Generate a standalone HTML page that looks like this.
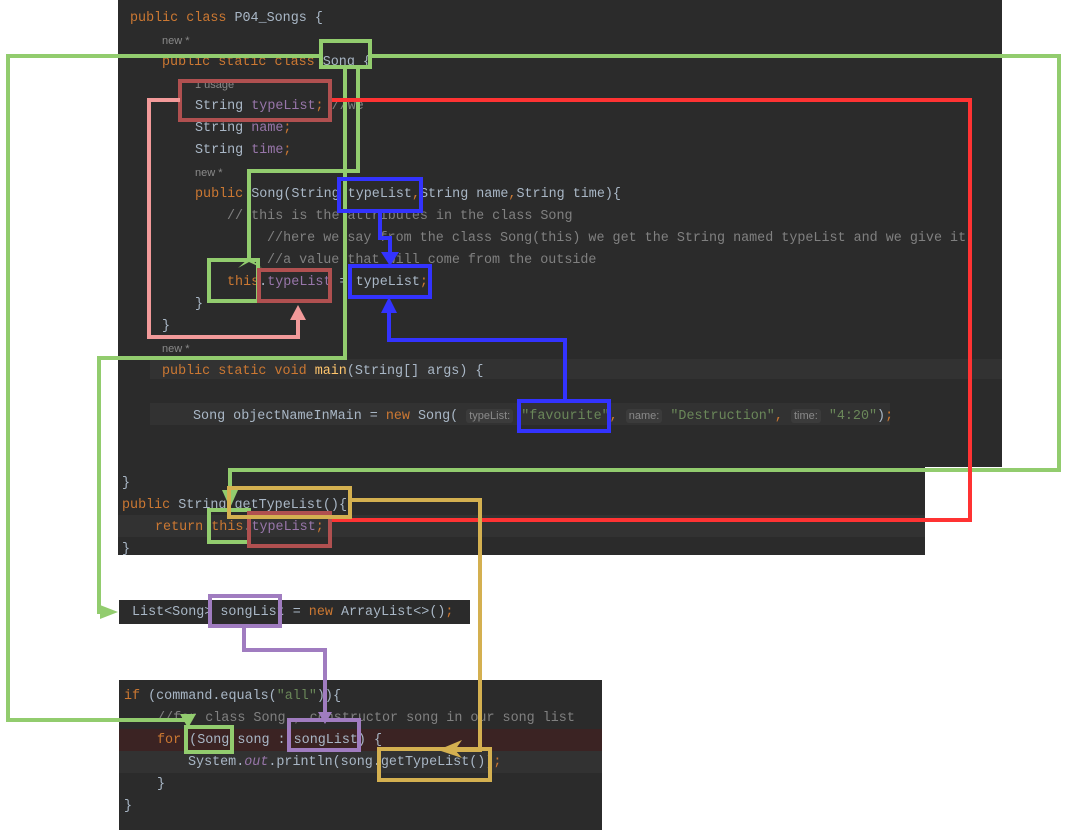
<!DOCTYPE html>
<html><head><meta charset="utf-8"><style>
body{margin:0;width:1070px;height:830px;background:#fff;position:relative;overflow:hidden;font-family:"Liberation Mono",monospace;}
.p{position:absolute;background:#2b2b2b;}
.t{position:absolute;white-space:pre;font-size:13.4px;line-height:16px;color:#a9b7c6;margin-top:2px}
.s{position:absolute;white-space:pre;font-family:"Liberation Sans",sans-serif;font-size:11px;color:#8a8a8a;margin-top:2px}
.k{color:#cc7832}.v{color:#9876aa}.c{color:#808080}.g{color:#6a8759}.y{color:#ffc66d}.h{background:#3b3b3b;color:#8a8a8a;font-family:"Liberation Sans",sans-serif;font-size:11px;padding:1px 3px;border-radius:3px}
svg{position:absolute;left:0;top:0}
</style></head><body>
<div class="p" style="left:118px;top:0;width:884px;height:467px"></div>
<div class="p" style="left:118px;top:467px;width:807px;height:88px"></div>
<div class="p" style="left:150px;top:359px;width:852px;height:20px;background:#323232"></div>
<div class="p" style="left:150px;top:403px;width:740px;height:22px;background:#323232"></div>
<div class="p" style="left:118px;top:515px;width:807px;height:22px;background:#323232"></div>
<div class="p" style="left:119px;top:600px;width:351px;height:24px"></div>
<div class="p" style="left:119px;top:680px;width:483px;height:150px"></div>
<div class="p" style="left:119px;top:729px;width:483px;height:22px;background:#3b2323"></div>
<div class="p" style="left:119px;top:751px;width:483px;height:22px;background:#323232"></div>

<div class="t" style="left:130px;top:9px"><span class="k">public class </span>P04_Songs {</div>
<div class="s" style="left:162px;top:33px">new *</div>
<div class="t" style="left:162px;top:53px"><span class="k">public static class </span>Song {</div>
<div class="s" style="left:195px;top:77px">1 usage</div>
<div class="t" style="left:195px;top:97px">String <span class="v">typeList</span><span class="k">;</span> <span class="c">//we</span></div>
<div class="t" style="left:195px;top:119px">String <span class="v">name</span><span class="k">;</span></div>
<div class="t" style="left:195px;top:141px">String <span class="v">time</span><span class="k">;</span></div>
<div class="s" style="left:195px;top:165px">new *</div>
<div class="t" style="left:195px;top:185px"><span class="k">public </span>Song(String typeList<span class="k">,</span>String name<span class="k">,</span>String time){</div>
<div class="t" style="left:227px;top:207px;color:#808080">// this is the attributes in the class Song</div>
<div class="t" style="left:267px;top:229px;color:#808080">//here we say from the class Song(this) we get the String named typeList and we give it</div>
<div class="t" style="left:267px;top:251px;color:#808080">//a value that will come from the outside</div>
<div class="t" style="left:227px;top:273px"><span class="k">this</span>.<span class="v">typeList</span> = typeList<span class="k">;</span></div>
<div class="t" style="left:195px;top:295px">}</div>
<div class="t" style="left:162px;top:317px">}</div>
<div class="s" style="left:162px;top:341px">new *</div>
<div class="t" style="left:162px;top:362px"><span class="k">public static void </span><span class="y">main</span>(String[] args) {</div>
<div class="t" style="left:193px;top:406px">Song objectNameInMain = <span class="k">new </span>Song( <span class="h">typeList:</span> <span class="g">"favourite"</span><span class="k">,</span> <span class="h">name:</span> <span class="g">"Destruction"</span><span class="k">,</span> <span class="h">time:</span> <span class="g">"4:20"</span>)<span class="k">;</span></div>
<div class="t" style="left:122px;top:474px">}</div>
<div class="t" style="left:122px;top:496px"><span class="k">public </span>String getTypeList(){</div>
<div class="t" style="left:155px;top:518px"><span class="k">return this</span>.<span class="v">typeList</span><span class="k">;</span></div>
<div class="t" style="left:122px;top:540px">}</div>
<div class="t" style="left:132px;top:603px">List&lt;Song&gt; songList = <span class="k">new </span>ArrayList&lt;&gt;()<span class="k">;</span></div>
<div class="t" style="left:124px;top:687px"><span class="k">if </span>(command.equals(<span class="g">"all"</span>)){</div>
<div class="t" style="left:157px;top:709px;color:#808080">//for class Song , constructor song in our song list</div>
<div class="t" style="left:157px;top:731px"><span class="k">for </span>(Song song : songList) {</div>
<div class="t" style="left:188px;top:753px">System.<span class="v" style="font-style:italic">out</span>.println(song.getTypeList())<span class="k">;</span></div>
<div class="t" style="left:157px;top:775px">}</div>
<div class="t" style="left:124px;top:797px">}</div>

<svg width="1070" height="830" fill="none" stroke-width="4">
<g stroke="#92cc6e">
<rect x="321" y="41" width="49" height="26"/>
<polyline points="319,56 8,56 8,720 188,720"/>
<polyline points="371,56 1059,56 1059,470 230,470 230,495"/>
<polyline points="345,68 345,358 99,358 99,612 110,612"/>
<polyline points="358,68 358,171 249,171 249,262"/>
<rect x="209" y="260" width="49" height="41"/>
<rect x="209" y="510" width="40" height="32"/>
<rect x="186" y="727" width="46" height="25"/>
</g>
<g fill="#92cc6e"><path d="M238,268 L249,258 L262,268 L249,262Z"/><path d="M222,490 L238,490 L230,508Z"/><path d="M100,605 L118,612 L100,619Z"/><path d="M180,714 L196,714 L188,728Z"/></g>
<g stroke="#ff3333"><polyline points="330,100 970,100 970,520 332,520"/></g>
<g stroke="#b05050"><rect x="180" y="81" width="150" height="39"/><rect x="259" y="270" width="71" height="31"/><rect x="249" y="513" width="81" height="33"/></g>
<g stroke="#f29a9a"><polyline points="180,100 149,100 149,337 298,337 298,310"/></g>
<path d="M290,320 L298,305 L306,320Z" fill="#f29a9a"/>
<g stroke="#3333ff"><rect x="339" y="179" width="82" height="32"/><rect x="350" y="266" width="80" height="31"/><rect x="519" y="401" width="90" height="30"/>
<polyline points="380,211 380,238 390,238 390,258"/><polyline points="565,401 565,340 389,340 389,310"/></g>
<g fill="#3333ff"><path d="M381,252 L399,252 L390,266Z"/><path d="M381,313 L389,297 L397,313Z"/></g>
<g stroke="#d4b050"><rect x="229" y="488" width="121" height="29"/><polyline points="350,500 480,500 480,750 445,750"/><rect x="379" y="749" width="111" height="31"/></g>
<path d="M438,750 L462,740 L455,750 L462,758Z" fill="#d4b050"/>
<g stroke="#a07cc0"><rect x="210" y="596" width="70" height="30"/><polyline points="244,626 244,650 325,650 325,718"/><rect x="289" y="720" width="70" height="30"/></g>
<path d="M318,712 L332,712 L325,724Z" fill="#a07cc0"/>
</svg>
</body></html>
